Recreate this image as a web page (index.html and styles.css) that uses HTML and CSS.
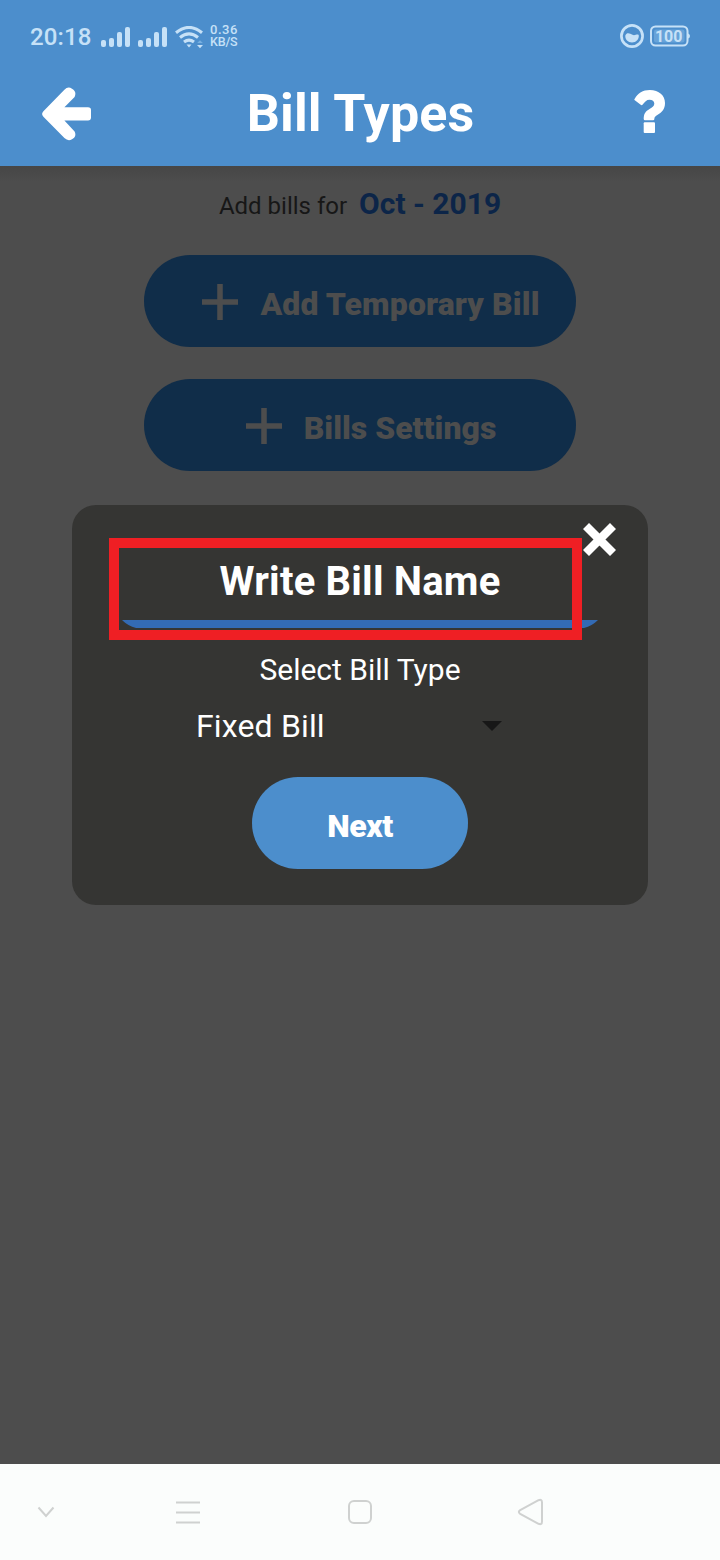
FILE: index.html
```html
<!DOCTYPE html>
<html lang="en">
<head>
<meta charset="utf-8">
<title>Bill Types</title>
<link rel="stylesheet" href="styles.css">
</head>
<body>
<div class="screen">
  <div class="status">
    <span class="clock">20:18</span>
    <svg class="signals" width="106" height="24" viewBox="0 0 106 24" fill="#c6e1f7">
      <rect x="0" y="14" width="5" height="7" rx="2"/><rect x="8" y="12" width="5" height="9" rx="2"/><rect x="16" y="6" width="5" height="15" rx="2"/><rect x="24" y="1" width="5" height="20" rx="2"/>
      <rect x="37" y="14" width="5" height="7" rx="2"/><rect x="45" y="12" width="5" height="9" rx="2"/><rect x="53" y="6" width="5" height="15" rx="2"/><rect x="61" y="1" width="5" height="20" rx="2"/>
      <g fill="none" stroke="#c6e1f7" stroke-width="3.1"><path d="M75 6.700Q88-3.800 101 6.700"/><path d="M79 11.500Q88 4.400 97 11.500"/><path d="M83 16Q88 12.300 93 16"/></g>
      <path d="M85.500 18.500h5l-2.500 3z"/><path d="M96 19h6l-3 3.200z"/><path d="M96.200 17h5.600L99 14.200z" fill="#78afe0"/>
    </svg>
    <span class="speed"><span class="rate">0.36</span><span class="unit">KB/S</span></span>
    <svg class="battery" width="72" height="26" viewBox="0 0 72 26">
      <circle cx="13" cy="13" r="10.600" fill="none" stroke="#c6e1f7" stroke-width="2.700"/>
      <path d="M6.300 12.500C8 8.500 11 10.500 13.500 11.800C16 13 18 10.500 19.700 12C20.500 16 17 19.500 13 19.500C9 19.500 6 16.500 6.300 12.500Z" fill="#c6e1f7"/>
      <rect x="32" y="3.500" width="36.500" height="19" rx="4.500" fill="none" stroke="#c6e1f7" stroke-width="2"/>
      <rect x="35" y="6.500" width="30.500" height="13" rx="2" fill="#67a3d9"/>
      <path d="M69 10.500q2 .5 2 2.500t-2 2.500z" fill="#c6e1f7"/>
      <text x="49.700" y="18.500" class="battery-text">100</text>
    </svg>
  </div>
  <header class="header">
    <svg width="50" height="54" viewBox="0 0 50 54"><path fill="#fff" d="M1.400 24.200L22.400 2.700Q26 -1 30 1.700Q35 4.500 32.600 10L22.400 20.200H46Q49 20.200 49 23V30.500Q49 33.500 46 33.500H22.400L32.600 44.500Q35 49.500 30 52.300Q26 54.500 22.400 51L1.400 29.700Q-1.200 27 1.400 24.200Z"/></svg>
    <h1>Bill Types</h1>
    <svg class="help" width="32" height="44" viewBox="0 0 32 44" fill="#fff"><path d="M.7 8.800C4 3.200 8.700 0 15.800 0C25 0 31 5.500 31 13C31 19 28 22.300 23.700 24.800C21.400 26.200 20.300 27 20.300 29.200Q20.300 30.300 19.100 30.300H11Q9.700 30.300 9.700 29C9.700 23.500 11.500 21.300 15.500 18.900C18.500 17.100 20.300 16 20.300 13.400C20.300 11.100 18.400 9.700 15.500 9.700C12.400 9.700 10.800 11.800 8.700 14.500Q7.800 15.700 6.700 14.800L.8 10.300Q-.1 9.700 .7 8.800Z"/><rect x="9.700" y="32.200" width="11.300" height="10.900" rx="1"/></svg>
  </header>
  <main class="content">
    <p class="period"><span>Add bills for</span><strong>Oct - 2019</strong></p>
    <div class="button dim"><svg width="36" height="36" viewBox="0 0 36 36"><path d="M18 0V36M0 18H36" stroke="#4d4d4d" stroke-width="5.500"/></svg><span class="temporary">Add Temporary Bill</span></div>
    <div class="button dim"><svg width="36" height="36" viewBox="0 0 36 36"><path d="M18 0V36M0 18H36" stroke="#4d4d4d" stroke-width="5.500"/></svg><span>Bills Settings</span></div>
    <section class="dialog">
      <div class="name">Write Bill Name</div>
      <svg class="underline" width="478" height="8" viewBox="0 0 478 8"><path d="M1 0H477Q471 6 463 8H15Q7 6 1 0Z" fill="#336bb5"/></svg>
      <div class="label">Select Bill Type</div>
      <div class="select"><span>Fixed Bill</span><svg width="20" height="10" viewBox="0 0 20 10"><path d="M0 0H20L10 10Z" fill="#171717"/></svg></div>
      <div class="button next"><span>Next</span></div>
      <div class="highlight"></div>
      <svg class="close" width="33" height="33" viewBox="0 0 33 33"><path d="M3 3L30 30M30 3L3 30" stroke="#fff" stroke-width="8.500"/></svg>
    </section>
  </main>
  <nav class="nav">
    <svg width="720" height="96" viewBox="0 0 720 96" fill="none" stroke="#cfd1d0" stroke-width="2">
      <path d="M38.500 43.500L46 52L53.500 43.500"/>
      <path d="M176 38.500H200M176 48.500H200M176 58.500H200"/>
      <rect x="349" y="37" width="22" height="22" rx="5"/>
      <path d="M520.200 46.200L538.500 36.200Q542 34.800 542 38.500V57.500Q542 61.200 538.500 59.800L520.200 49.800Q517.500 48 520.200 46.200Z"/>
    </svg>
  </nav>
</div>
</body>
</html>
```
FILE: styles.css
```css
* { box-sizing: border-box; }
body { margin: 0; font-family: Roboto, sans-serif; }
svg { display: block; flex: none; }
.screen { width: 720px; height: 1560px; display: flex; flex-direction: column; background: #4d4d4d; overflow: hidden; }
.status { height: 72px; flex: none; display: flex; align-items: center; padding: 0 29px 0 30px; background: #4c8ecc; color: #c6e1f7; }
.clock { width: 71px; font-size: 24px; line-height: 28px; padding-top: 1px; font-weight: 500; letter-spacing: 0.1px; white-space: nowrap; }
.signals { margin-top: 4px; }
.speed { display: flex; flex-direction: column; margin-left: 3px; font-weight: 500; line-height: 12px; }
.rate { font-size: 13px; letter-spacing: 0.5px; }
.unit { font-size: 12.500px; letter-spacing: -0.2px; }
.battery { margin-left: auto; }
.battery-text { font: 700 16px Roboto, sans-serif; fill: #c6e1f7; text-anchor: middle; }
.header { height: 94px; flex: none; display: grid; grid-template-columns: 50px 1fr 32px; align-items: start; padding: 15px 54px 0 42px; background: #4c8ecc; }
.header h1 { margin: 0 5px 0 0; font-size: 52px; line-height: 53px; font-weight: 700; letter-spacing: 0.1px; text-align: center; color: #fff; }
.help { margin-top: 3px; }
.content { flex: 1; display: flex; flex-direction: column; align-items: center; background: linear-gradient(#464646, #4d4d4d 16px); }
.period { display: flex; align-items: baseline; gap: 12px; margin: 19px 0 33px; height: 37px; line-height: 37px; font-size: 24px; color: #171717; white-space: nowrap; }
.period strong { font-size: 30px; color: #0c2548; }
.button { display: flex; align-items: center; justify-content: center; gap: 22px; height: 92px; border-radius: 46px; font-size: 32px; font-weight: 900; white-space: nowrap; }
.button span { line-height: 38px; padding-top: 6px; }
.dim { width: 432px; margin-bottom: 32px; background: #102d49; color: #4d4d4d; padding: 1px 0 0 22px; }
.dim span { padding-top: 4px; }
.temporary { letter-spacing: 0.1px; }
.dialog { position: relative; width: 576px; height: 400px; margin-top: 2px; padding-top: 52px; display: flex; flex-direction: column; align-items: center; border-radius: 24px; background: #353533; color: #fff; }
.name { font-size: 40px; line-height: 50px; font-weight: 700; height: 63px; letter-spacing: 0.2px; }
.label { margin-top: 22px; font-size: 30px; line-height: 40px; }
.select { width: 306px; height: 40px; margin: 16px 0 31px 124px; display: flex; align-items: center; justify-content: space-between; align-self: flex-start; font-size: 32px; line-height: 40px; letter-spacing: 0.15px; }
.next { width: 216px; background: #4c8ecc; letter-spacing: -0.5px; }
.highlight { position: absolute; left: 37px; top: 33px; width: 473px; height: 102px; border: 10px solid #ef1f24; }
.close { position: absolute; left: 511px; top: 18px; }
.nav { height: 96px; flex: none; background: #fbfdfc; }
```
